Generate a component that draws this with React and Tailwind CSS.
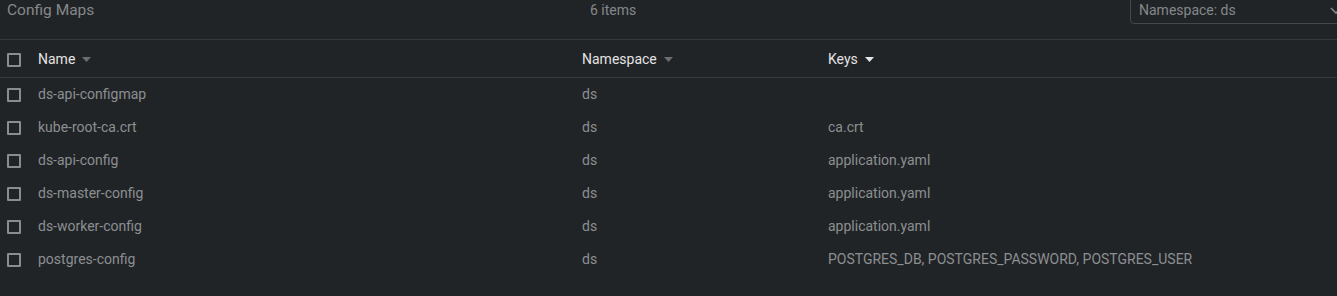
import React from 'react';

const rows = [
  { name: 'ds-api-configmap', ns: 'ds', keys: '' },
  { name: 'kube-root-ca.crt', ns: 'ds', keys: 'ca.crt' },
  { name: 'ds-api-config', ns: 'ds', keys: 'application.yaml' },
  { name: 'ds-master-config', ns: 'ds', keys: 'application.yaml' },
  { name: 'ds-worker-config', ns: 'ds', keys: 'application.yaml' },
  { name: 'postgres-config', ns: 'ds', keys: 'POSTGRES_DB, POSTGRES_PASSWORD, POSTGRES_USER' },
];

const Checkbox = () => (
  <span className="block w-[14px] h-[14px] border-2 border-[#8a8c8e] rounded-[1px]" />
);

const SortArrow = ({ active }) => (
  <svg width="9" height="5" viewBox="0 0 9 5" className="ml-[7px]">
    <path d="M0 0 L9 0 L4.5 5 Z" fill={active ? '#e6e6e6' : '#6b6e71'} />
  </svg>
);

export default function App() {
  return (
    <div className="w-[1337px] h-[296px] bg-[#212427] overflow-hidden text-[14px] font-['Roboto',sans-serif]">
      {/* 상단 툴바 */}
      <div className="relative h-[40px] border-b border-[#35383b]">
        <span className="absolute left-[7px] top-0 leading-[20px] text-[15.5px] text-[#85888b]">Config Maps</span>
        <span className="absolute left-[590px] top-0 leading-[20px] text-[#85888b]">6 items</span>
        <div className="absolute left-[1130px] top-[-10px] w-[220px] h-[34px] border border-[#45484b] rounded-[4px] flex items-end pb-[4px] pl-[8px] leading-[18px] text-[14px] text-[#85888b]">
          Namespace: ds
          <svg width="12" height="8" viewBox="0 0 12 8" className="absolute left-[199px] top-[16px]">
            <path d="M1 1 L6 6 L11 1" stroke="#85888b" strokeWidth="1.6" fill="none" />
          </svg>
        </div>
      </div>

      {/* 테이블 헤더 */}
      <div className="flex items-center h-[38px] pt-[2px] border-b border-[#35383b] text-[#e3e3e3]">
        <div className="w-[38px] pl-[7px]"><Checkbox /></div>
        <div className="w-[544px] flex items-center">Name<SortArrow /></div>
        <div className="w-[246px] flex items-center">Namespace<SortArrow /></div>
        <div className="flex items-center">Keys<SortArrow active /></div>
      </div>

      {/* 행 */}
      <div>
        {rows.map((r) => (
          <div key={r.name} className="flex items-center h-[33px] text-[#8c8f92]">
            <div className="w-[38px] pl-[7px]"><Checkbox /></div>
            <div className="w-[544px]">{r.name}</div>
            <div className="w-[246px]">{r.ns}</div>
            <div>{r.keys}</div>
          </div>
        ))}
      </div>
    </div>
  );
}
